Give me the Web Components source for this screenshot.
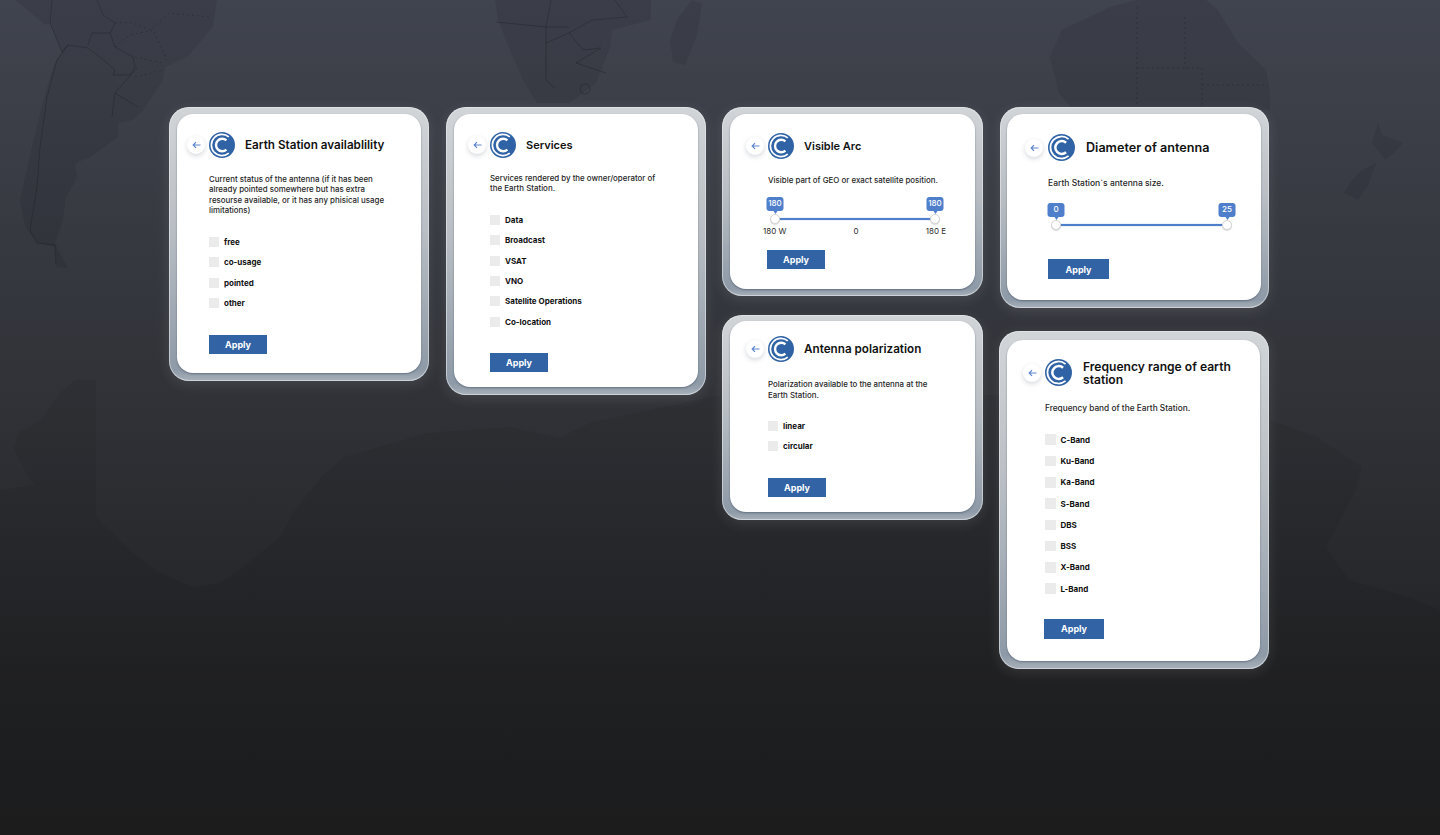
<!DOCTYPE html>
<html lang="en">
<head>
<meta charset="utf-8">
<title>Earth Station filters</title>
<style>
  html, body { margin: 0; height: 835px; overflow: hidden; }
  body { background: linear-gradient(180deg, #40444e 0%, #2f3136 50%, #1f2021 88%, #1e1e1f 100%); }
</style>
</head>
<body>
<map-backdrop></map-backdrop>
<filter-page>
  <filter-column>
    <info-card heading="Earth Station availablility" style="--w:260px;--pad:7px 8px 8px;--head-top:18px;--head-left:10px;--inset:32px;--desc-gap:16px;--list-gap:21px;--row-gap:10.5px;--apply-gap:26.5px;--pad-bottom:19px;--title:11.7px">
      <info-text>Current status of the antenna (if it has been already pointed somewhere but has extra resourse available, or it has any phisical usage limitations)</info-text>
      <option-list><check-option>free</check-option><check-option>co-usage</check-option><check-option>pointed</check-option><check-option>other</check-option></option-list>
      <apply-button></apply-button>
    </info-card>
  </filter-column>
  <filter-column>
    <info-card heading="Services" style="--w:260px;--pad:7px 8px 8px;--head-top:18px;--head-left:14px;--inset:36px;--body-right:34px;--desc-gap:15px;--list-gap:21px;--row-gap:10.4px;--apply-gap:26px;--pad-bottom:15px;--title:11px">
      <info-text>Services rendered by the owner/operator of the Earth Station.</info-text>
      <option-list><check-option>Data</check-option><check-option>Broadcast</check-option><check-option>VSAT</check-option><check-option>VNO</check-option><check-option>Satellite Operations</check-option><check-option>Co-location</check-option></option-list>
      <apply-button></apply-button>
    </info-card>
  </filter-column>
  <filter-column style="--col-gap:19px">
    <info-card heading="Visible Arc" style="--w:261px;--pad:7px 8px 7px;--head-top:19px;--head-left:16px;--inset:38px;--desc-gap:16px;--apply-gap:14px;--apply-shift:-1px;--pad-bottom:20px;--title:11px">
      <info-text>Visible part of GEO or exact satellite position.</info-text>
      <range-slider from="180" to="180" low="180 W" mid="0" high="180 E" style="--track-w:160px;--gap-top:10px;--track-left:7px"></range-slider>
      <apply-button></apply-button>
    </info-card>
    <info-card heading="Antenna polarization" style="--w:261px;--pad:6px 8px 8px;--head-top:15px;--head-left:16px;--inset:38px;--desc-gap:17px;--list-gap:20.7px;--row-gap:10.5px;--apply-gap:27px;--pad-bottom:15px;--title:11.7px">
      <info-text>Polarization available to the antenna at the Earth Station.</info-text>
      <option-list><check-option>linear</check-option><check-option>circular</check-option></option-list>
      <apply-button></apply-button>
    </info-card>
  </filter-column>
  <filter-column style="--col-gap:23px">
    <info-card heading="Diameter of antenna" style="--w:269px;--pad:7px 8px 8px 7px;--head-top:20px;--head-left:18px;--logo:27px;--logo-gap:5px;--title-gap:11px;--inset:41px;--desc-gap:17px;--apply-gap:32.6px;--apply-w:61px;--apply-h:20px;--pad-bottom:21px;--title:12.6px;--desc:8.5px">
      <info-text>Earth Station`s antenna size.</info-text>
      <range-slider from="0" to="25" style="--track-w:171px;--gap-top:13px;--track-left:8px"></range-slider>
      <apply-button></apply-button>
    </info-card>
    <info-card heading="Frequency range of earth station" style="--w:270px;--pad:9px 9px 8px 8px;--head-top:19px;--head-left:16px;--logo:27px;--title-gap:11px;--inset:38px;--desc-gap:17px;--list-gap:21px;--row-gap:10.8px;--box:10.5px;--apply-gap:24.7px;--apply-shift:-1px;--apply-w:60px;--apply-h:20px;--pad-bottom:22px;--title:12.1px;--desc:8.3px">
      <info-text>Frequency band of the Earth Station.</info-text>
      <option-list><check-option>C-Band</check-option><check-option>Ku-Band</check-option><check-option>Ka-Band</check-option><check-option>S-Band</check-option><check-option>DBS</check-option><check-option>BSS</check-option><check-option>X-Band</check-option><check-option>L-Band</check-option></option-list>
      <apply-button></apply-button>
    </info-card>
  </filter-column>
</filter-page>

<script>
(function (document, window) {

  function shadow(host, html) {
    const $template = document.createElement('template');
    $template.innerHTML = html;
    const root = host.shadowRoot || host.attachShadow({ mode: 'open' });
    root.appendChild(document.importNode($template.content, true));
    return root;
  }

  window.customElements.define('map-backdrop', class extends HTMLElement {
    connectedCallback() {
      shadow(this, `
        <style>
          :host { position: absolute; left: 0; top: 0; width: 1440px; height: 835px; z-index: 0; display: block; }
          svg { display: block; }
          .soft { filter: blur(.5px); }
          .land { fill: rgba(12, 14, 20, .09); }
          .line { fill: none; stroke: rgba(14, 16, 22, .28); stroke-width: .9; }
          .dash { fill: none; stroke: rgba(14, 16, 22, .26); stroke-width: 1; stroke-dasharray: 2 3; }
          .ice { fill: rgba(0, 0, 0, .06); }
        </style>
        <svg width="1440" height="835" viewBox="0 0 1440 835">
          <g class="soft">
            <!-- south america -->
            <path class="land" d="M15 0L25 8 45 25 50 23 62 52 55 62 44 97 32 147 20 200 25 227 37 243 55 247 57 267 68 268 58 250 55 243 63 220 65 200 77 177 75 163 90 157 118 137 118 123 133 120 143 110 163 80 165 67 187 57 213 27 217 0Z"/>
            <path class="line" d="M68 45L57 60 47 97 40 147 37 187 32 217 30 230 37 243 55 245 56 265M68 45L88 48 100 57 115 70 113 75 130 75 135 67 133 57 115 47 110 33 92 33 88 45M50 23L62 52 68 45M52 0L50 23M97 0L103 15 115 23 110 33M115 93L137 68M115 93L112 117M115 93L138 107"/>
            <!-- africa -->
            <path class="land" d="M495 0L498 20 510 50 523 80 537 103 569 103 596 83 610 47 612 30 651 20 651 0Z"/>
            <path class="line" d="M496 22L546 27 569 27M551 0L546 27 546 80 555 88M546 43L569 33 583 50 601 48 576 63 606 73M592 20L627 17 615 0M569 33L592 20"/>
            <circle class="line" cx="585" cy="89" r="5"/>
            <path class="land" d="M692 0L702 4 697 35 685 65 673 62 670 40 678 18Z"/>
            <!-- australia -->
            <path class="land" d="M1110 7L1137 0 1206 0 1218 10 1238 43 1266 70 1270 92 1270 110 1073 110 1059 93 1050 57 1062 30Z"/>
            <!-- new zealand -->
            <path class="land" d="M1378 123L1382 135 1403 143 1395 152 1385 160 1378 150 1372 143ZM1376 163L1368 185 1358 200 1344 193 1352 180 1362 170Z"/>
            <!-- antarctica -->
            <path class="ice" d="M75 380L96 380 96 517 133 553 160 573 193 587 220 583 243 567 280 537 293 513 321 477 344 457 427 433 509 427 560 438 592 422 660 408 720 395 1270 395 1270 420 1317 437 1362 467 1356 490 1326 547 1349 580 1409 597 1440 610 1440 835 0 835 0 490 34 485 23 467 14 450 18 433 41 420 60 393Z"/>
          </g>
          <path class="dash" d="M115 23L130 22 150 30 170 13 210 17M115 47L130 35 153 30 167 60M135 57L163 63M135 77L163 70"/>
          <path class="dash" d="M1137 7V107M1185 17V68M1137 68H1202M1202 85H1268M1202 68V107"/>
        </svg>
      `);
    }
  });

  window.customElements.define('filter-page', class extends HTMLElement {
    connectedCallback() {
      shadow(this, `
        <style>
          :host { position: relative; z-index: 1; display: flex; align-items: flex-start; gap: 16px; padding: 107px 0 0 169px; font-family: "Inter", "Liberation Sans", sans-serif; color: #111; }
        </style>
        <slot></slot>
      `);
    }
  });

  window.customElements.define('filter-column', class extends HTMLElement {
    connectedCallback() {
      shadow(this, `
        <style>
          :host { display: flex; flex-direction: column; align-items: flex-start; gap: var(--col-gap, 0); min-width: 260px; }
          :host(:first-child) { min-width: 261px; }
          :host(:last-child) { align-items: flex-end; }
        </style>
        <slot></slot>
      `);
    }
  });

  window.customElements.define('back-button', class extends HTMLElement {
    connectedCallback() {
      shadow(this, `
        <style>
          :host { flex: none; display: flex; align-items: center; justify-content: center; width: 18px; height: 18px; border-radius: 50%; background: #fff; box-shadow: 0 2px 5px rgba(30, 40, 60, .18); }
          svg { display: block; }
        </style>
        <svg width="9" height="8" viewBox="0 0 9 8"><path d="M8.5 4H1.2M4 1.2L1.2 4 4 6.8" fill="none" stroke="#5f86d0" stroke-width="1.2"/></svg>
      `);
    }
  });

  window.customElements.define('sat-logo', class extends HTMLElement {
    connectedCallback() {
      shadow(this, `
        <style>
          :host { flex: none; display: block; width: var(--logo, 26px); height: var(--logo, 26px); }
          svg { display: block; width: 100%; height: 100%; }
        </style>
        <svg viewBox="0 0 26 26">
          <circle cx="13" cy="13" r="13" fill="#2f63a5"/>
          <path d="M19.8 4.9A10.6 10.6 0 1 0 19.8 21.1" fill="none" stroke="#fff" stroke-width="1.7"/>
          <path d="M17.4 8.4A6.2 6.2 0 1 0 17.4 17.6" fill="none" stroke="#fff" stroke-width="2.4"/>
        </svg>
      `);
    }
  });

  window.customElements.define('info-card', class extends HTMLElement {
    connectedCallback() {
      const heading = this.getAttribute('heading');
      shadow(this, `
        <style>
          :host { display: block; box-sizing: border-box; width: var(--w); padding: var(--pad); border-radius: 20px; background: linear-gradient(180deg, #d2d5d8 0%, #b9bec4 45%, #8e9aa7 96%, #a7b0ba 100%); box-shadow: inset 0 0 0 1px rgba(235, 238, 240, .55), 0 3px 14px rgba(255, 255, 255, .11); }
          .panel { background: #fff; border-radius: 16px; padding: var(--head-top) 0 var(--pad-bottom); box-shadow: 0 1px 2px rgba(60, 75, 95, .55); }
          header { display: flex; align-items: center; padding-left: var(--head-left); }
          sat-logo { margin-left: var(--logo-gap, 4px); }
          h2 { margin: 0 20px 0 var(--title-gap, 10px); font: 600 var(--title, 12px)/13px "Inter", "Liberation Sans", sans-serif; color: #111; }
          .body { padding: var(--desc-gap) var(--body-right, 26px) 0 var(--inset); }
        </style>
        <div class="panel">
          <header>
            <back-button></back-button>
            <sat-logo></sat-logo>
            <h2>${heading}</h2>
          </header>
          <div class="body"><slot></slot></div>
        </div>
      `);
    }
  });

  window.customElements.define('info-text', class extends HTMLElement {
    connectedCallback() {
      shadow(this, `
        <style>
          :host { display: block; font-size: var(--desc, 7.9px); font-weight: 500; line-height: 10.4px; color: #262626; }
        </style>
        <slot></slot>
      `);
    }
  });

  window.customElements.define('option-list', class extends HTMLElement {
    connectedCallback() {
      shadow(this, `
        <style>
          :host { display: flex; flex-direction: column; gap: var(--row-gap); margin-top: var(--list-gap); }
        </style>
        <slot></slot>
      `);
    }
  });

  window.customElements.define('check-option', class extends HTMLElement {
    connectedCallback() {
      shadow(this, `
        <style>
          :host { display: flex; align-items: center; gap: 5px; height: var(--box, 10px); font-size: 8px; font-weight: 700; color: #111; white-space: nowrap; }
          i { flex: none; width: var(--box, 10px); height: var(--box, 10px); background: #ebebeb; }
        </style>
        <i></i><slot></slot>
      `);
    }
  });

  window.customElements.define('apply-button', class extends HTMLElement {
    connectedCallback() {
      shadow(this, `
        <style>
          :host { display: flex; align-items: center; justify-content: center; box-sizing: border-box; width: var(--apply-w, 58px); height: var(--apply-h, 19px); margin: var(--apply-gap) 0 0 var(--apply-shift, 0); background: #3264a5; color: #fff; font-size: 9px; font-weight: 700; }
        </style>
        <span>Apply</span>
      `);
    }
  });

  window.customElements.define('range-slider', class extends HTMLElement {
    connectedCallback() {
      const from = this.getAttribute('from');
      const to = this.getAttribute('to');
      const low = this.getAttribute('low');
      const labels = low === null ? '' : `
        <div class="labels"><span>${low}</span><span>${this.getAttribute('mid')}</span><span>${this.getAttribute('high')}</span></div>`;
      shadow(this, `
        <style>
          :host { display: block; margin-top: var(--gap-top); padding-top: 23px; }
          .track { position: relative; width: var(--track-w); height: 2px; margin-left: var(--track-left); background: #4f7fcb; box-shadow: 0 0 1px #4f7fcb; }
          .thumb { position: absolute; top: -4px; width: 10px; height: 10px; box-sizing: border-box; border-radius: 50%; background: #fff; border: 1px solid #d4d4d4; box-shadow: 0 1px 1px rgba(0, 0, 0, .15); }
          .thumb.a { left: -5px; }
          .thumb.b { right: -5px; }
          .tip { position: absolute; top: -18px; left: 50%; transform: translateX(-50%); width: 17px; height: 13.5px; border-radius: 3px; background: #4f7fcb; color: #fff; font-size: 8px; font-weight: 500; line-height: 13.5px; text-align: center; }
          .tip::after { content: ""; position: absolute; left: 50%; bottom: -3px; margin-left: -2px; border: solid transparent; border-width: 3px 2px 0; border-top-color: #4f7fcb; }
          .labels { display: flex; justify-content: space-between; width: calc(var(--track-w) + 23px); margin: 6px 0 0 -5px; font-size: 8px; line-height: 10px; color: #2b2b2b; }
        </style>
        <div class="track">
          <div class="thumb a"><div class="tip">${from}</div></div>
          <div class="thumb b"><div class="tip">${to}</div></div>
        </div>${labels}
      `);
    }
  });

})(document, window);
</script>
</body>
</html>
